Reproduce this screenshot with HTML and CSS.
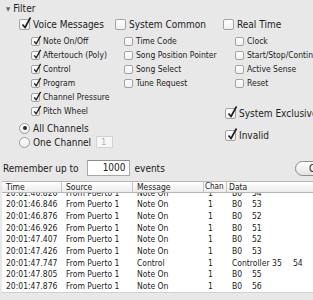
FILE: index.html
```html
<!DOCTYPE html>
<html>
  <head>
    <link rel="stylesheet" href="styles.css">
  </head>
  <body>
    <div class="window">
      <div class="filter-head"><span class="disclosure">&#9660;</span>Filter</div>

      <div class="groups">
        <div class="group">
          <label class="main"><span class="box on"><svg class="tick" viewBox="0 0 10 10"><path d="M1.5 5.5 L4 8.5 L9.5 -1.5"/></svg></span>Voice Messages</label>
          <div class="subs">
            <label class="sub"><span class="box on"><svg class="tick" viewBox="0 0 10 10"><path d="M1.5 5.5 L4 8.5 L9.5 -1.5"/></svg></span>Note On/Off</label>
            <label class="sub"><span class="box on"><svg class="tick" viewBox="0 0 10 10"><path d="M1.5 5.5 L4 8.5 L9.5 -1.5"/></svg></span>Aftertouch (Poly)</label>
            <label class="sub"><span class="box on"><svg class="tick" viewBox="0 0 10 10"><path d="M1.5 5.5 L4 8.5 L9.5 -1.5"/></svg></span>Control</label>
            <label class="sub"><span class="box on"><svg class="tick" viewBox="0 0 10 10"><path d="M1.5 5.5 L4 8.5 L9.5 -1.5"/></svg></span>Program</label>
            <label class="sub"><span class="box on"><svg class="tick" viewBox="0 0 10 10"><path d="M1.5 5.5 L4 8.5 L9.5 -1.5"/></svg></span>Channel Pressure</label>
            <label class="sub"><span class="box on"><svg class="tick" viewBox="0 0 10 10"><path d="M1.5 5.5 L4 8.5 L9.5 -1.5"/></svg></span>Pitch Wheel</label>
          </div>
          <div class="radios">
            <label class="main"><span class="dot on"></span>All Channels</label>
            <label class="main"><span class="dot"></span>One Channel<span class="field">1</span></label>
          </div>
        </div>

        <div class="group common">
          <label class="main"><span class="box"></span>System Common</label>
          <div class="subs">
            <label class="sub"><span class="box"></span>Time Code</label>
            <label class="sub"><span class="box"></span>Song Position Pointer</label>
            <label class="sub"><span class="box"></span>Song Select</label>
            <label class="sub"><span class="box"></span>Tune Request</label>
          </div>
        </div>

        <div class="group realtime">
          <label class="main"><span class="box"></span>Real Time</label>
          <div class="subs">
            <label class="sub"><span class="box"></span>Clock</label>
            <label class="sub"><span class="box"></span>Start/Stop/Continue</label>
            <label class="sub"><span class="box"></span>Active Sense</label>
            <label class="sub"><span class="box"></span>Reset</label>
          </div>
          <label class="main sysex"><span class="box on"><svg class="tick" viewBox="0 0 10 10"><path d="M1.5 5.5 L4 8.5 L9.5 -1.5"/></svg></span>System Exclusive</label>
          <label class="main invalid"><span class="box on"><svg class="tick" viewBox="0 0 10 10"><path d="M1.5 5.5 L4 8.5 L9.5 -1.5"/></svg></span>Invalid</label>
        </div>
      </div>

      <div class="remember">
        <span>Remember up to</span>
        <span class="count">1000</span>
        <span>events</span>
        <button class="clear-button">Clear</button>
      </div>

      <div class="event-table">
        <div class="table-head">
          <div class="col time">Time</div>
          <div class="col source">Source</div>
          <div class="col message">Message</div>
          <div class="col chan">Chan</div>
          <div class="col data">Data</div>
        </div>
        <div class="table-body">
          <div class="rows">
            <div class="row"><div class="col time">20:01:46.826</div><div class="col source">From Puerto 1</div><div class="col message">Note On</div><div class="col chan">1</div><div class="col data"><span class="d1">B0</span><span>54</span></div></div>
            <div class="row"><div class="col time">20:01:46.846</div><div class="col source">From Puerto 1</div><div class="col message">Note On</div><div class="col chan">1</div><div class="col data"><span class="d1">B0</span><span>53</span></div></div>
            <div class="row"><div class="col time">20:01:46.876</div><div class="col source">From Puerto 1</div><div class="col message">Note On</div><div class="col chan">1</div><div class="col data"><span class="d1">B0</span><span>52</span></div></div>
            <div class="row"><div class="col time">20:01:46.926</div><div class="col source">From Puerto 1</div><div class="col message">Note On</div><div class="col chan">1</div><div class="col data"><span class="d1">B0</span><span>51</span></div></div>
            <div class="row"><div class="col time">20:01:47.407</div><div class="col source">From Puerto 1</div><div class="col message">Note On</div><div class="col chan">1</div><div class="col data"><span class="d1">B0</span><span>52</span></div></div>
            <div class="row"><div class="col time">20:01:47.426</div><div class="col source">From Puerto 1</div><div class="col message">Note On</div><div class="col chan">1</div><div class="col data"><span class="d1">B0</span><span>53</span></div></div>
            <div class="row"><div class="col time">20:01:47.747</div><div class="col source">From Puerto 1</div><div class="col message">Control</div><div class="col chan">1</div><div class="col data"><span class="d1 wide">Controller 35</span><span>54</span></div></div>
            <div class="row"><div class="col time">20:01:47.805</div><div class="col source">From Puerto 1</div><div class="col message">Note On</div><div class="col chan">1</div><div class="col data"><span class="d1">B0</span><span>55</span></div></div>
            <div class="row"><div class="col time">20:01:47.876</div><div class="col source">From Puerto 1</div><div class="col message">Note On</div><div class="col chan">1</div><div class="col data"><span class="d1">B0</span><span>56</span></div></div>
          </div>
        </div>
      </div>
    </div>
  </body>
</html>
```

FILE: styles.css
```css
body {
  margin: 0;
  background: #e8e8e8;
  overflow: hidden;
}

.window {
  width: 360px;
  font-family: "DejaVu Sans Condensed", "DejaVu Sans", sans-serif;
  font-stretch: condensed;
  color: #1c1c1c;
}

/* Filter disclosure header */
.filter-head {
  height: 16px;
  display: flex;
  align-items: center;
  padding-left: 6px;
  font-size: 10px;
}

.disclosure {
  font-size: 6px;
  color: #666;
  margin-right: 3px;
}

.groups {
  display: grid;
  grid-template-columns: 96px 108px 1fr;
  padding-left: 19px;
  margin-top: 1px;
}

.main {
  height: 14px;
  display: flex;
  align-items: center;
  font-size: 10px;
  white-space: nowrap;
}

.sub {
  height: 14px;
  display: flex;
  align-items: center;
  font-size: 8.5px;
  white-space: nowrap;
}

.subs {
  margin-top: 3px;
  padding-left: 12px;
}

.common .subs {
  padding-left: 9px;
}

/* Aqua-ish checkboxes */
.box {
  position: relative;
  flex: none;
  width: 9px;
  height: 9px;
  margin-right: 3px;
  background: linear-gradient(#ffffff, #f0f0f0);
  border: 1px solid #a3a3a3;
  border-radius: 2px;
}

.sub .box {
  width: 7px;
  height: 7px;
  margin-right: 3px;
}

.tick {
  position: absolute;
  left: 1px;
  top: -1px;
  width: 10px;
  height: 10px;
  overflow: visible;
}

.sub .tick {
  width: 8px;
  height: 8px;
}

.tick path {
  fill: none;
  stroke: #222;
  stroke-width: 1.7;
  stroke-linejoin: round;
}

.radios {
  margin-top: 3px;
}

.dot {
  position: relative;
  flex: none;
  width: 9px;
  height: 9px;
  margin-right: 3px;
  border: 1px solid #9c9c9c;
  border-radius: 50%;
  background: linear-gradient(#ffffff, #ededed);
}

.dot.on::after {
  content: "";
  position: absolute;
  left: 2.5px;
  top: 2.5px;
  width: 4px;
  height: 4px;
  border-radius: 50%;
  background: #2a2a2a;
}

.field {
  width: 17px;
  height: 12px;
  margin-left: 5px;
  padding-left: 4px;
  box-sizing: border-box;
  background: #f6f6f6;
  border: 1px solid #d2d2d2;
  color: #aaa;
  font-size: 8.5px;
  line-height: 10px;
}

.realtime .sysex {
  margin-top: 16px;
  margin-left: 2px;
}

.realtime .invalid {
  margin-top: 8px;
  margin-left: 2px;
}

/* Remember row */
.remember {
  display: flex;
  align-items: center;
  margin-top: 11px;
  padding: 0 15px 0 3px;
  font-size: 10px;
  white-space: nowrap;
}

.count {
  width: 43px;
  height: 16px;
  margin: 0 5px 0 8px;
  padding-right: 3px;
  box-sizing: border-box;
  background: #fff;
  border: 1px solid #a9a9a9;
  border-top-color: #8c8c8c;
  text-align: right;
  line-height: 14px;
}

.clear-button {
  margin-left: auto;
  width: 50px;
  height: 15px;
  padding: 0 0 0 13px;
  text-align: left;
  font-family: inherit;
  font-stretch: condensed;
  font-size: 10px;
  line-height: 13px;
  color: #1c1c1c;
  background: linear-gradient(#ffffff, #e4e4e4);
  border: 1px solid #8e8e8e;
  border-radius: 8px;
}

/* Event table */
.event-table {
  margin: 5px 0 0 2px;
  border-top: 1px solid #b8b8b8;
  border-bottom: 1px solid #d0d0d0;
  font-size: 8.5px;
}

.table-head {
  display: flex;
  height: 10px;
  line-height: 10px;
  background: linear-gradient(#ffffff, #ececec);
  border-bottom: 1px solid #b5b5b5;
}

.table-head .col {
  border-right: 1px solid #c4c4c4;
  box-sizing: border-box;
}

.table-head .chan {
  padding-left: 1px;
  font-size: 8px;
}

.table-head .data {
  padding-left: 2px;
}

.table-body {
  height: 99px;
  overflow: hidden;
  background: #fff;
}

.rows {
  margin-top: -5.5px;
}

.row {
  display: flex;
  height: 11.7px;
  line-height: 11.7px;
  white-space: nowrap;
}

.col {
  padding-left: 4px;
  box-sizing: border-box;
  overflow: hidden;
}

.time {
  width: 60px;
}

.source {
  width: 71px;
}

.message {
  width: 71px;
}

.chan {
  width: 23px;
}

.data {
  flex: 1;
  display: flex;
}

.row .data {
  padding-left: 5px;
}

.d1 {
  width: 20px;
}

.d1.wide {
  width: 61px;
}
```
